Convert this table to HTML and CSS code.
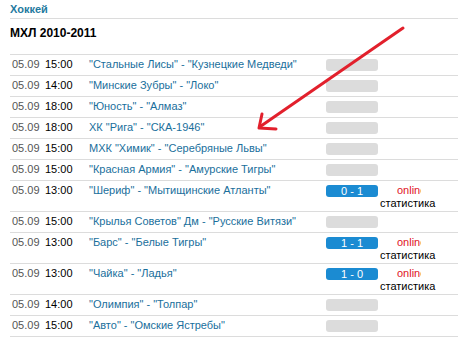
FILE: index.html
```html
<!DOCTYPE html>
<html lang="ru">
<head>
<meta charset="utf-8">
<title>Хоккей</title>
<link rel="stylesheet" href="styles.css">
</head>
<body>
<div class="page">
  <div class="sport">Хоккей</div>
  <div class="league">МХЛ 2010-2011</div>
  <div class="games">
    <div class="row"><span class="date">05.09</span><span class="time">15:00</span><a class="teams">"Стальные Лисы" - "Кузнецкие Медведи"</a><span class="score"><span class="box empty"></span></span><span class="extra"></span></div>
    <div class="row"><span class="date">05.09</span><span class="time">14:00</span><a class="teams">"Минские Зубры" - "Локо"</a><span class="score"><span class="box empty"></span></span><span class="extra"></span></div>
    <div class="row"><span class="date">05.09</span><span class="time">18:00</span><a class="teams">"Юность" - "Алмаз"</a><span class="score"><span class="box empty"></span></span><span class="extra"></span></div>
    <div class="row"><span class="date">05.09</span><span class="time">18:00</span><a class="teams">ХК "Рига" - "СКА-1946"</a><span class="score"><span class="box empty"></span></span><span class="extra"></span></div>
    <div class="row"><span class="date">05.09</span><span class="time">15:00</span><a class="teams">МХК "Химик" - "Серебряные Львы"</a><span class="score"><span class="box empty"></span></span><span class="extra"></span></div>
    <div class="row"><span class="date">05.09</span><span class="time">15:00</span><a class="teams">"Красная Армия" - "Амурские Тигры"</a><span class="score"><span class="box empty"></span></span><span class="extra"></span></div>
    <div class="row two"><span class="date">05.09</span><span class="time">13:00</span><a class="teams">"Шериф" - "Мытищинские Атланты"</a><span class="score"><span class="box live">0 - 1</span></span><span class="extra"><span class="online">online</span><span class="stats">статистика</span></span></div>
    <div class="row"><span class="date">05.09</span><span class="time">15:00</span><a class="teams">"Крылья Советов" Дм - "Русские Витязи"</a><span class="score"><span class="box empty"></span></span><span class="extra"></span></div>
    <div class="row two"><span class="date">05.09</span><span class="time">13:00</span><a class="teams">"Барс" - "Белые Тигры"</a><span class="score"><span class="box live">1 - 1</span></span><span class="extra"><span class="online">online</span><span class="stats">статистика</span></span></div>
    <div class="row two"><span class="date">05.09</span><span class="time">13:00</span><a class="teams">"Чайка" - "Ладья"</a><span class="score"><span class="box live">1 - 0</span></span><span class="extra"><span class="online">online</span><span class="stats">статистика</span></span></div>
    <div class="row"><span class="date">05.09</span><span class="time">14:00</span><a class="teams">"Олимпия" - "Толпар"</a><span class="score"><span class="box empty"></span></span><span class="extra"></span></div>
    <div class="row"><span class="date">05.09</span><span class="time">15:00</span><a class="teams">"Авто" - "Омские Ястребы"</a><span class="score"><span class="box empty"></span></span><span class="extra"></span></div>
  </div>
</div>
<svg class="arrow" width="458" height="338" viewBox="0 0 458 338">
  <line x1="403" y1="28" x2="261" y2="126" stroke="#e2202c" stroke-width="3" stroke-linecap="round"/>
  <polyline points="262,114 259,128 276,129" fill="none" stroke="#e2202c" stroke-width="3" stroke-linecap="round" stroke-linejoin="round"/>
</svg>
</body>
</html>
```
FILE: styles.css
```css
html, body {
  margin: 0;
  padding: 0;
  background: #fff;
}
body {
  font-family: "Liberation Sans", Arial, sans-serif;
  font-size: 11px;
  color: #000;
  overflow: hidden;
  position: relative;
}
.page {
  padding-left: 10px;
}
.sport {
  font-weight: bold;
  color: #1f7aa0;
  line-height: 13px;
  padding-top: 3px;
  padding-bottom: 2px;
  border-bottom: 1px solid #dcdcdc;
}
.league {
  font-weight: bold;
  font-size: 12px;
  line-height: 14px;
  padding-top: 7px;
  height: 28px;
}
.games {
  border-top: 1px solid #dcdcdc;
}
.row {
  display: grid;
  grid-template-columns: 33px 44px 237px 54px 78px;
  align-items: start;
  box-sizing: border-box;
  height: 21px;
  padding: 3px 0 0 2px;
  line-height: 13px;
  border-bottom: 1px solid #dcdcdc;
  overflow: hidden;
}
.row.two {
  height: 31px;
}
.date {
  color: #555;
}
.time {
  color: #000;
}
.teams {
  color: #1a6f9c;
  white-space: nowrap;
}
.score {
  display: flex;
}
.box {
  display: block;
  width: 52px;
  height: 12px;
  border-radius: 3px;
  margin-top: 1px;
  line-height: 12px;
  text-align: center;
  font-size: 11px;
}
.box.empty {
  background: #dcdcdc;
}
.box.live {
  background: #1b8bd2;
  color: #fff;
}
.extra {
  display: flex;
  flex-direction: column;
}
.online {
  color: #e0141e;
  margin-left: 17px;
  width: 24px;
  overflow: hidden;
  white-space: nowrap;
}
.stats {
  color: #000;
  white-space: nowrap;
}
.arrow {
  position: absolute;
  left: 0;
  top: 0;
  pointer-events: none;
}
```
